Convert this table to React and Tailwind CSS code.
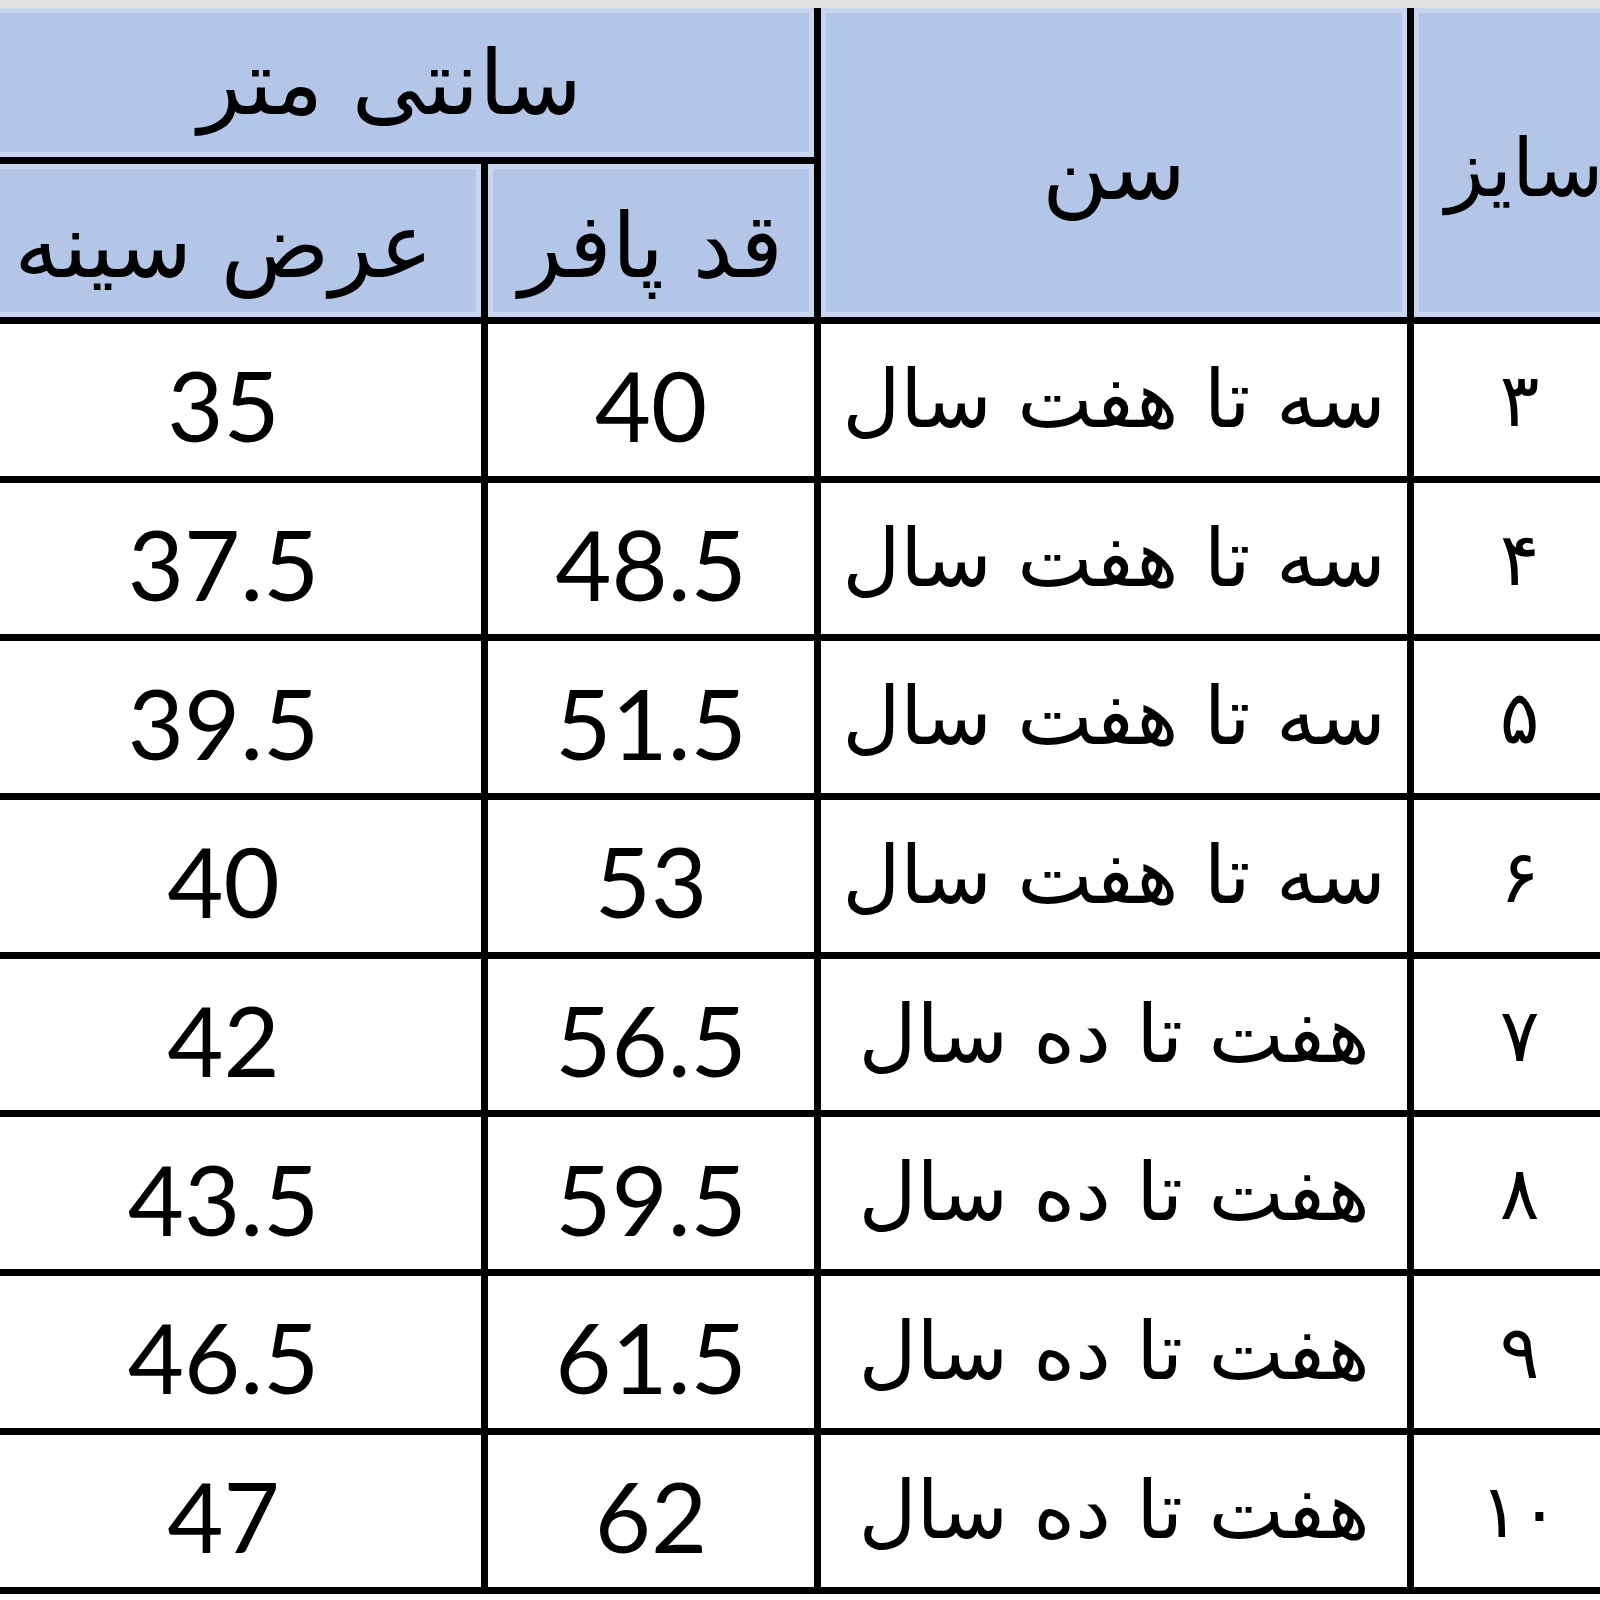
import React from "react";

const rows = [
  { size: "۳", age: "سه تا هفت سال", qad: "40", arz: "35" },
  { size: "۴", age: "سه تا هفت سال", qad: "48.5", arz: "37.5" },
  { size: "۵", age: "سه تا هفت سال", qad: "51.5", arz: "39.5" },
  { size: "۶", age: "سه تا هفت سال", qad: "53", arz: "40" },
  { size: "۷", age: "هفت تا ده سال", qad: "56.5", arz: "42" },
  { size: "۸", age: "هفت تا ده سال", qad: "59.5", arz: "43.5" },
  { size: "۹", age: "هفت تا ده سال", qad: "61.5", arz: "46.5" },
  { size: "۱۰", age: "هفت تا ده سال", qad: "62", arz: "47" },
];

const head =
  "flex items-center justify-center bg-[#b4c6e7] shadow-[inset_0_0_0_5px_#c8d6f0] text-black leading-none [font-family:'DejaVu_Sans',sans-serif]";
const fa =
  "flex items-center justify-center bg-white text-black text-[80px] leading-none [font-family:'DejaVu_Sans',sans-serif]";
const sz =
  "flex items-center justify-center bg-white text-black text-[74px] leading-none [font-family:'DejaVu_Sans',sans-serif]";
const num =
  "flex items-center justify-center pt-[10px] bg-white text-black text-[97px] leading-none [font-family:Lato,'Open_Sans',sans-serif]";

const App = () => {
  return (
    <main className="w-[1600px] h-[1600px] overflow-hidden bg-white">
      <div className="h-2 bg-[#e2e2e2]" />
      <div className="ml-[-34px] w-[1659px]">
        <div
          dir="rtl"
          className="grid grid-cols-[211px_586px_326px_515px] grid-rows-[149px_153px_repeat(8,151.7px)] gap-[7px] bg-black pb-[7px]"
        >
          <div className={`${head} col-start-1 row-start-1 row-span-2 pt-[12px] pl-[10px] text-[80px]`}>
            سایز
          </div>
          <div className={`${head} col-start-2 row-start-1 row-span-2 pt-[10px] text-[90px]`}>سن</div>
          <div className={`${head} col-start-3 col-span-2 row-start-1 text-[90px]`}>سانتی متر</div>
          <div className={`${head} col-start-3 row-start-2 pt-[10px] text-[90px]`}>قد پافر</div>
          <div className={`${head} col-start-4 row-start-2 pt-[10px] text-[90px]`}>عرض سینه</div>

          {rows.map((r) => (
            <React.Fragment key={r.size}>
              <div className={sz}>{r.size}</div>
              <div className={fa}>{r.age}</div>
              <div className={num}>{r.qad}</div>
              <div className={num}>{r.arz}</div>
            </React.Fragment>
          ))}
        </div>
      </div>
    </main>
  );
};

export default App;
